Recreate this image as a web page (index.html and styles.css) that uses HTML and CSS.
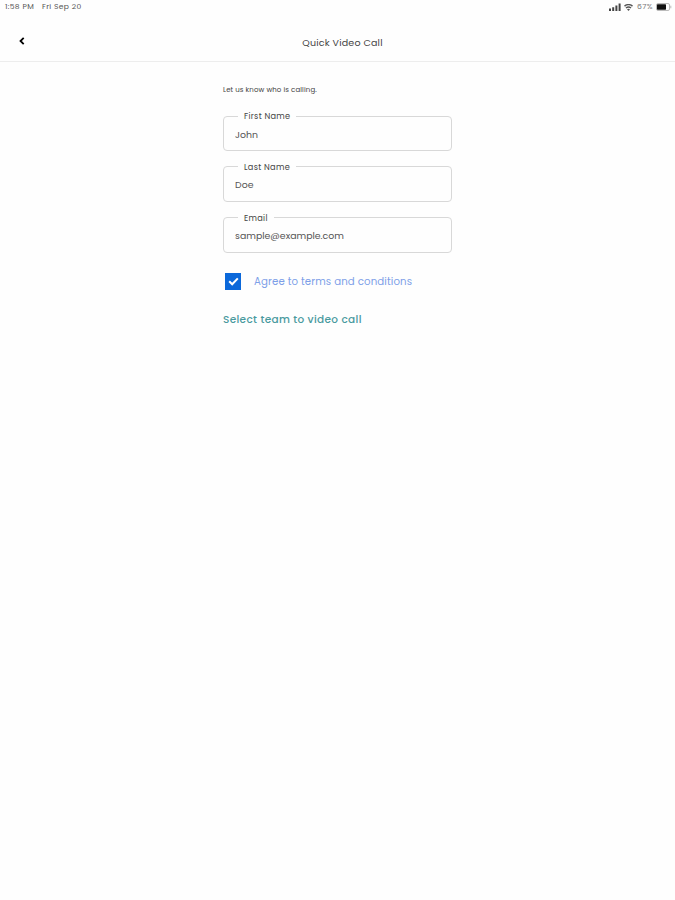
FILE: index.html
```
<!DOCTYPE html>
<html lang="en">
<head>
    <meta charset="UTF-8">
    <meta name="viewport" content="width=device-width, initial-scale=1.0">
    <title>Quick Video Call</title>
    <link rel="stylesheet" href="styles.css">
</head>
<body>
    <div class="status-bar">
        <span class="time">1:58 PM</span>
        <span class="date">Fri Sep 20</span>
        <svg class="signal" width="12" height="8" viewBox="0 0 12 8">
            <path d="M0 5.5h2V8H0zM3.2 4.2h2V8h-2zM6.4 2.5h2V8h-2zM9.6.5h2V8h-2z" fill="#444"/>
        </svg>
        <svg class="wifi" width="9" height="7" viewBox="0 0 9 7">
            <path d="M.5 2.2Q4.5-1 8.5 2.2M2 4Q4.5 2 7 4" fill="none" stroke="#555" stroke-width="1.5"/>
            <path d="M3 5.3Q4.5 4.2 6 5.3L4.5 7z" fill="#555"/>
        </svg>
        <span class="percent">67%</span>
        <svg class="battery" width="16" height="8" viewBox="0 0 16 8">
            <rect x=".5" y=".5" width="13" height="7" rx="1.5" fill="none" stroke="#bbb"/>
            <rect x="1" y="1.3" width="9" height="5.4" rx=".6" fill="#111"/>
            <path d="M14.8 2.7v2.6" stroke="#bbb"/>
        </svg>
    </div>

    <header>
        <button class="back" aria-label="Back">
            <svg width="6" height="8" viewBox="0 0 6 8">
                <path d="M4.7.8L1.5 4l3.2 3.2" fill="none" stroke="#000" stroke-width="1.8"/>
            </svg>
        </button>
        <h1>Quick Video Call</h1>
    </header>

    <form class="call-form">
        <p class="intro">Let us know who is calling.</p>
        <fieldset>
            <legend><label for="first-name">First Name</label></legend>
            <input type="text" id="first-name" value="John">
        </fieldset>
        <fieldset>
            <legend><label for="last-name">Last Name</label></legend>
            <input type="text" id="last-name" value="Doe">
        </fieldset>
        <fieldset>
            <legend><label for="email">Email</label></legend>
            <input type="text" id="email" value="sample@example.com">
        </fieldset>
        <div class="terms">
            <span class="checkbox" role="checkbox" aria-checked="true">
                <svg width="11" height="9" viewBox="0 0 11 9">
                    <path d="M1.2 4.3l3 3L9.8 1.4" fill="none" stroke="#fff" stroke-width="2"/>
                </svg>
            </span>
            <a class="terms-link">Agree to terms and conditions</a>
        </div>
        <a class="team-link">Select team to video call</a>
    </form>
</body>
</html>
```

FILE: styles.css
```
* {
    box-sizing: border-box;
}
body {
    margin: 0;
    background: #fefefe;
    font-family: Poppins, Inter, "Liberation Sans", sans-serif;
    color: #444;
}
.status-bar {
    display: flex;
    align-items: center;
    height: 14px;
    padding: 0 3px 0 5px;
    font-size: 7.6px;
    letter-spacing: 0.35px;
    color: #555;
}
.time {
    width: 37px;
    white-space: nowrap;
}
.signal {
    margin-left: auto;
}
.wifi {
    margin: 0 4px 0 3px;
}
.percent {
    width: 19px;
    color: #777;
}
header {
    display: grid;
    grid-template-columns: 44px 1fr 34px;
    align-items: center;
    height: 48px;
    padding-top: 7px;
    border-bottom: 1px solid #ededed;
}
.back {
    display: flex;
    height: 24px;
    padding: 0 0 0 19px;
    align-items: center;
    border: none;
    background: none;
}
h1 {
    margin: 4px 0 0;
    font-size: 9.5px;
    font-weight: 400;
    text-align: center;
    letter-spacing: 0.2px;
}
.call-form {
    width: 229px;
    margin-left: 223px;
    padding-top: 22px;
}
.intro {
    margin: 0 0 14px;
    font-size: 7px;
    line-height: 12px;
    letter-spacing: 0.12px;
}
fieldset {
    height: 41px;
    margin: 0 0 9.8px;
    padding: 0 11px;
    border: 1px solid #d8d8d8;
    border-radius: 4px;
}
legend {
    margin-left: 3px;
    padding: 0 6px;
    font-size: 8.2px;
    line-height: 12px;
    letter-spacing: 0.3px;
}
input {
    display: block;
    width: 100%;
    height: 25px;
    padding: 0;
    border: none;
    background: none;
    font: 9.4px Poppins, Inter, "Liberation Sans", sans-serif;
    color: #555;
}
.terms {
    display: flex;
    align-items: center;
    height: 18px;
    margin-top: 20px;
}
.checkbox {
    display: flex;
    align-items: center;
    justify-content: center;
    width: 16px;
    height: 17px;
    margin: 0 13px 0 2px;
    background: #0b68da;
}
.terms-link {
    padding-top: 1px;
    font-size: 10.2px;
    letter-spacing: 0.13px;
    color: #7d9fe8;
    white-space: nowrap;
}
.team-link {
    display: block;
    margin-top: 21px;
    font-size: 10.5px;
    font-weight: 500;
    line-height: 16px;
    letter-spacing: 0.34px;
    color: #4a9a9e;
}
```
